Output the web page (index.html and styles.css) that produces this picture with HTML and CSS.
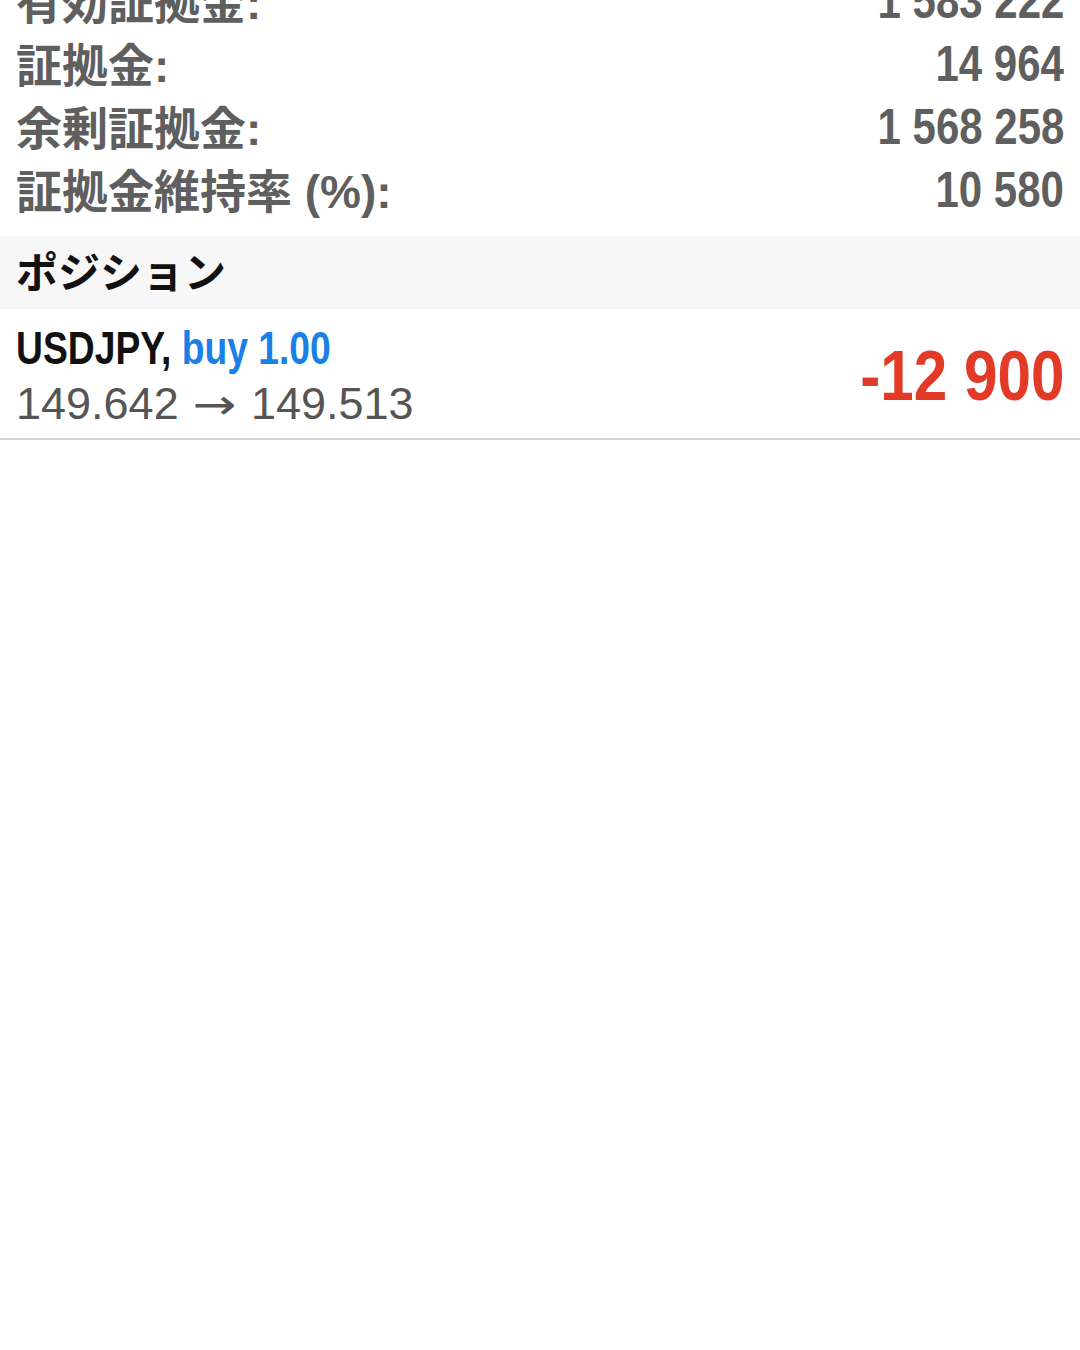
FILE: index.html
```html
<!DOCTYPE html>
<html lang="ja">
<head>
<meta charset="utf-8">
<link rel="stylesheet" href="styles.css">
</head>
<body>
<div class="summary">
  <div class="row"><span class="label">有効証拠金:</span><span class="value">1 583 222</span></div>
  <div class="row"><span class="label">証拠金:</span><span class="value">14 964</span></div>
  <div class="row"><span class="label">余剰証拠金:</span><span class="value">1 568 258</span></div>
  <div class="row"><span class="label">証拠金維持率 (%):</span><span class="value">10 580</span></div>
</div>
<div class="section">ポジション</div>
<div class="position">
  <div class="pos-left">
    <div class="pos-title"><span class="sym">USDJPY,</span> <span class="buy">buy 1.00</span></div>
    <div class="pos-price">149.642 <span class="arrow">→</span> 149.513</div>
  </div>
  <div class="pos-profit">-12 900</div>
</div>
</body>
</html>
```
FILE: styles.css
```css
html, body {
  margin: 0;
  padding: 0;
  background: #ffffff;
}
body {
  width: 1080px;
  height: 1350px;
  overflow: hidden;
  font-family: "Liberation Sans", "Noto Sans CJK JP", sans-serif;
}
.summary {
  margin-top: -31px;
  padding: 0 16px 15px;
  display: flex;
  flex-direction: column;
}
.row {
  height: 63px;
  display: flex;
  align-items: center;
  justify-content: space-between;
  color: #5f5f5f;
  font-weight: bold;
}
.label {
  font-family: "Liberation Sans", "Noto Sans CJK JP", sans-serif;
  font-size: 46px;
  margin-top: -3px;
}
.value {
  display: inline-block;
  font-family: "Liberation Sans", sans-serif;
  font-size: 50px;
  transform: scaleX(0.84);
  transform-origin: right center;
}
.section {
  height: 73px;
  box-sizing: border-box;
  padding: 0 16px 6px;
  background: #f7f7f7;
  display: flex;
  align-items: center;
  font-family: "Noto Sans CJK JP", sans-serif;
  font-weight: bold;
  font-size: 42px;
  color: #111111;
}
.position {
  height: 129px;
  border-bottom: 2px solid #d4d4d4;
  display: flex;
  align-items: center;
  justify-content: space-between;
  padding: 0 16px;
}
.pos-left {
  display: flex;
  flex-direction: column;
  gap: 2px;
  padding-top: 2px;
}
.pos-title {
  display: inline-block;
  font-family: "Liberation Sans", sans-serif;
  font-weight: bold;
  font-size: 46px;
  line-height: 56px;
  transform: scaleX(0.81);
  transform-origin: left center;
  white-space: nowrap;
}
.sym { color: #111111; }
.buy { color: #1a7fe6; }
.pos-price {
  font-family: "Liberation Sans", sans-serif;
  font-size: 45px;
  line-height: 52px;
  height: 52px;
  color: #555555;
  white-space: nowrap;
}
.arrow {
  display: inline-block;
  font-family: "DejaVu Sans", sans-serif;
  font-size: 42px;
  line-height: 52px;
  margin: 0 6px;
  transform: scaleX(1.25);
}
.pos-profit {
  display: inline-block;
  font-family: "Liberation Sans", sans-serif;
  font-weight: bold;
  font-size: 70px;
  color: #e23a26;
  transform: scaleX(0.86);
  transform-origin: right center;
  padding-top: 4px;
}
```
